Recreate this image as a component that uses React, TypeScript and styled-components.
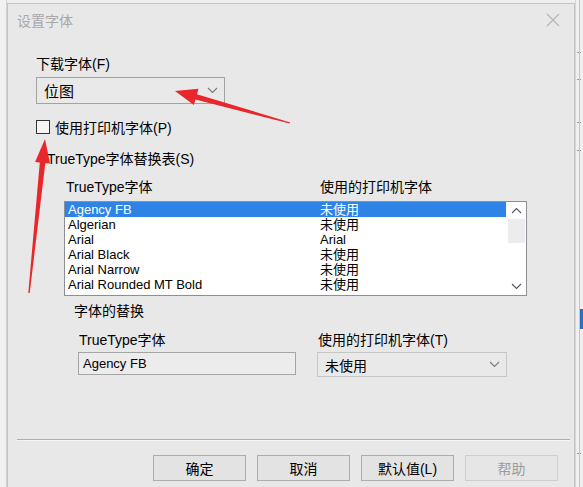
import styled, { createGlobalStyle } from "styled-components";

const GlobalStyle = createGlobalStyle`
  html, body {
    margin: 0;
    padding: 0;
    background: #efefef;
    overflow: hidden;
  }
  body {
    font-family: "Liberation Sans", "Noto Sans CJK SC", sans-serif;
    font-size: 14px;
    color: #000;
  }
`;

type Pt = [number, number];

// builds a tapered arrow (thin tail, wide head) as polygon points
const arrowPoints = (
  tail: Pt,
  tip: Pt,
  tailW: number,
  neckW: number,
  headLen: number,
  headW: number
) => {
  const dx = tip[0] - tail[0];
  const dy = tip[1] - tail[1];
  const len = Math.hypot(dx, dy);
  const ux = dx / len;
  const uy = dy / len;
  const nx = -uy;
  const ny = ux;
  const neck: Pt = [tip[0] - ux * headLen, tip[1] - uy * headLen];
  const at = (p: Pt, w: number): string =>
    `${(p[0] + nx * w).toFixed(1)},${(p[1] + ny * w).toFixed(1)}`;
  return [
    at(tail, tailW / 2),
    at(neck, neckW / 2),
    at(neck, headW / 2),
    `${tip[0]},${tip[1]}`,
    at(neck, -headW / 2),
    at(neck, -neckW / 2),
    at(tail, -tailW / 2),
  ].join(" ");
};

const fonts = [
  { name: "Agency FB", printer: "未使用" },
  { name: "Algerian", printer: "未使用" },
  { name: "Arial", printer: "Arial" },
  { name: "Arial Black", printer: "未使用" },
  { name: "Arial Narrow", printer: "未使用" },
  { name: "Arial Rounded MT Bold", printer: "未使用" },
];

export default function App() {
  return (
    <>
      <GlobalStyle />
      <Screen>
        <LeftEdge />
        <Dialog>
          <TitleBar>
            <Title>设置字体</Title>
            <CloseIcon width="14" height="14" viewBox="0 0 14 14">
              <path d="M1 1 L13 13 M13 1 L1 13" stroke="#b4b4b4" strokeWidth="1.1" />
            </CloseIcon>
          </TitleBar>
          <Body>
            <Label>下载字体(F)</Label>
            <Combo $width={189} $height={27} $border="#a3a3a3">
              <ComboText $size={15}>位图</ComboText>
              <Chevron dir="down" />
            </Combo>
            <CheckRow>
              <CheckBox />
              <span>使用打印机字体(P)</span>
            </CheckRow>
            <GroupLabel>TrueType字体替换表(S)</GroupLabel>
            <ColumnHeads>
              <span>TrueType字体</span>
              <span>使用的打印机字体</span>
            </ColumnHeads>
            <ListBox>
              <Rows>
                {fonts.map((f, i) => (
                  <Row key={f.name} $selected={i === 0}>
                    <Cell>{f.name}</Cell>
                    <Cell>{f.printer}</Cell>
                  </Row>
                ))}
              </Rows>
              <ScrollBar>
                <ScrollArrow>
                  <Chevron dir="up" color="#555" />
                </ScrollArrow>
                <Thumb />
                <ScrollTrack />
                <ScrollArrow>
                  <Chevron dir="down" color="#555" />
                </ScrollArrow>
              </ScrollBar>
            </ListBox>
            <SubHead>字体的替换</SubHead>
            <SubGrid>
              <Field>
                <FieldLabel>TrueType字体</FieldLabel>
                <TextBox>Agency FB</TextBox>
              </Field>
              <Field>
                <FieldLabel>使用的打印机字体(T)</FieldLabel>
                <Combo $width={190} $height={25} $border="#c6c6c6">
                  <ComboText $size={14}>未使用</ComboText>
                  <Chevron dir="down" />
                </Combo>
              </Field>
            </SubGrid>
          </Body>
          <Separator />
          <ButtonRow>
            <Button>确定</Button>
            <Button>取消</Button>
            <Button>默认值(L)</Button>
            <Button disabled>帮助</Button>
          </ButtonRow>
        </Dialog>
        <RightEdge>
          <EdgeTick $top={52} />
          <EdgeTick $top={79} />
          <EdgeTick $top={122} />
          <EdgeTick $top={150} />
          <EdgeMark />
          <EdgeTick $top={453} />
        </RightEdge>
        <Arrows width="583" height="487" viewBox="0 0 583 487">
          <polygon points={arrowPoints([290, 123], [175, 91], 1.2, 5.5, 22, 17)} />
          <polygon points={arrowPoints([29, 293], [45, 139], 1.5, 5.5, 24, 15)} />
        </Arrows>
      </Screen>
    </>
  );
}

function Chevron({ dir, color = "#7a7a7a" }: { dir: "up" | "down"; color?: string }) {
  return (
    <svg width="11" height="7" viewBox="0 0 11 7">
      <polyline
        points={dir === "down" ? "1,1 5.5,5.5 10,1" : "1,6 5.5,1.5 10,6"}
        fill="none"
        stroke={color}
        strokeWidth="1.1"
      />
    </svg>
  );
}

const Screen = styled.div`
  position: relative;
  display: flex;
  width: 583px;
  height: 487px;
  overflow: hidden;
`;

const LeftEdge = styled.div`
  flex: 0 0 6px;
  border-right: 1px solid #d2d2d2;
  background: #f1f1f1;
`;

const Dialog = styled.div`
  flex: 0 0 568px;
  margin-top: 3px;
  height: 500px;
  display: flex;
  flex-direction: column;
  background: #e8e8e8;
  border: 1px solid #c4c4c4;
  border-bottom: none;
  box-sizing: border-box;
`;

const TitleBar = styled.div`
  height: 32px;
  display: flex;
  align-items: center;
  justify-content: space-between;
  padding: 0 14px 0 9px;
`;

const Title = styled.span`
  color: #a9a9a9;
  font-family: "Noto Sans CJK SC", sans-serif;
  font-size: 14px;
`;

const CloseIcon = styled.svg`
  display: block;
`;

const Body = styled.div`
  display: flex;
  flex-direction: column;
  padding: 19px 0 0 28px;
`;

const Label = styled.div`
  height: 18px;
  line-height: 18px;
`;

const Combo = styled.div<{ $width: number; $height: number; $border: string }>`
  width: ${(p) => p.$width}px;
  height: ${(p) => p.$height}px;
  box-sizing: border-box;
  margin-top: 4px;
  display: flex;
  align-items: center;
  justify-content: space-between;
  padding: 0 6px 0 7px;
  border: 1px solid ${(p) => p.$border};
  background: #e9e9e9;
`;

const ComboText = styled.span<{ $size: number }>`
  font-size: ${(p) => p.$size}px;
`;

const CheckRow = styled.div`
  margin-top: 14px;
  height: 18px;
  display: flex;
  align-items: center;
  gap: 5px;
`;

const CheckBox = styled.div`
  width: 14px;
  height: 14px;
  box-sizing: border-box;
  border: 1px solid #333;
  background: #f4f4f4;
`;

const GroupLabel = styled.div`
  margin: 14px 0 0 11px;
  height: 18px;
  line-height: 18px;
`;

const ColumnHeads = styled.div`
  margin: 10px 0 0 30px;
  height: 18px;
  line-height: 18px;
  display: grid;
  grid-template-columns: 254px 1fr;
`;

const ListBox = styled.div`
  margin: 5px 0 0 28px;
  width: 463px;
  height: 95px;
  box-sizing: border-box;
  border: 1px solid #8c8f95;
  background: #fff;
  display: flex;
`;

const Rows = styled.div`
  flex: 1;
  display: flex;
  flex-direction: column;
`;

const Row = styled.div<{ $selected?: boolean }>`
  height: 15px;
  line-height: 15px;
  display: grid;
  grid-template-columns: 252px 1fr;
  padding-left: 3px;
  margin-right: 1px;
  font-size: 13px;
  background: ${(p) => (p.$selected ? "#2d84e6" : "transparent")};
  color: ${(p) => (p.$selected ? "#fff" : "#000")};
`;

const Cell = styled.span`
  white-space: nowrap;
`;

const ScrollBar = styled.div`
  flex: 0 0 19px;
  display: flex;
  flex-direction: column;
  background: #fff;
`;

const ScrollArrow = styled.div`
  height: 17px;
  display: flex;
  align-items: center;
  justify-content: center;
`;

const Thumb = styled.div`
  height: 24px;
  margin: 0 1px;
  background: #ececec;
`;

const ScrollTrack = styled.div`
  flex: 1;
`;

const SubHead = styled.div`
  margin: 6px 0 0 38px;
  height: 18px;
  line-height: 18px;
`;

const SubGrid = styled.div`
  margin: 11px 0 0 42px;
  display: grid;
  grid-template-columns: 239px 190px;
`;

const Field = styled.div`
  display: flex;
  flex-direction: column;
  & > div:last-child {
    margin-top: 3px;
  }
`;

const FieldLabel = styled.div`
  height: 18px;
  line-height: 18px;
  padding-left: 1px;
`;

const TextBox = styled.div`
  width: 218px;
  height: 23px;
  box-sizing: border-box;
  border: 1px solid #a5a5a5;
  background: #ececec;
  padding-left: 4px;
  line-height: 21px;
  font-size: 13px;
`;

const Separator = styled.div`
  margin: 62px 4px 0 9px;
  height: 1px;
  background: #aeaeae;
  border-bottom: 1px solid #f4f4f4;
`;

const ButtonRow = styled.div`
  margin-top: 14px;
  display: flex;
  justify-content: flex-end;
  gap: 11px;
  padding-right: 16px;
`;

const Button = styled.button`
  width: 93px;
  height: 26px;
  padding: 0;
  border: 1px solid #adadad;
  background: #e3e3e3;
  font-family: "Liberation Sans", "Noto Sans CJK SC", sans-serif;
  font-size: 14px;
  color: #000;
  &:disabled {
    border-color: #cdcdcd;
    color: #9c9c9c;
    background: #e6e6e6;
  }
`;

const RightEdge = styled.div`
  position: relative;
  flex: 1;
  border-left: 1px solid #d6d6d6;
  background: #efefef;
  &::after {
    content: "";
    position: absolute;
    left: 3px;
    top: 0;
    bottom: 0;
    border-left: 1px solid #c6c6c6;
  }
`;

const EdgeTick = styled.div<{ $top: number }>`
  position: absolute;
  left: 1px;
  top: ${(p) => p.$top}px;
  width: 4px;
  height: 1px;
  background: #9a9a9a;
`;

const EdgeMark = styled.div`
  position: absolute;
  left: 4px;
  top: 309px;
  width: 4px;
  height: 20px;
  background: #2c6fc6;
`;

const Arrows = styled.svg`
  position: absolute;
  left: 0;
  top: 0;
  pointer-events: none;
  polygon {
    fill: #e8262b;
  }
`;
